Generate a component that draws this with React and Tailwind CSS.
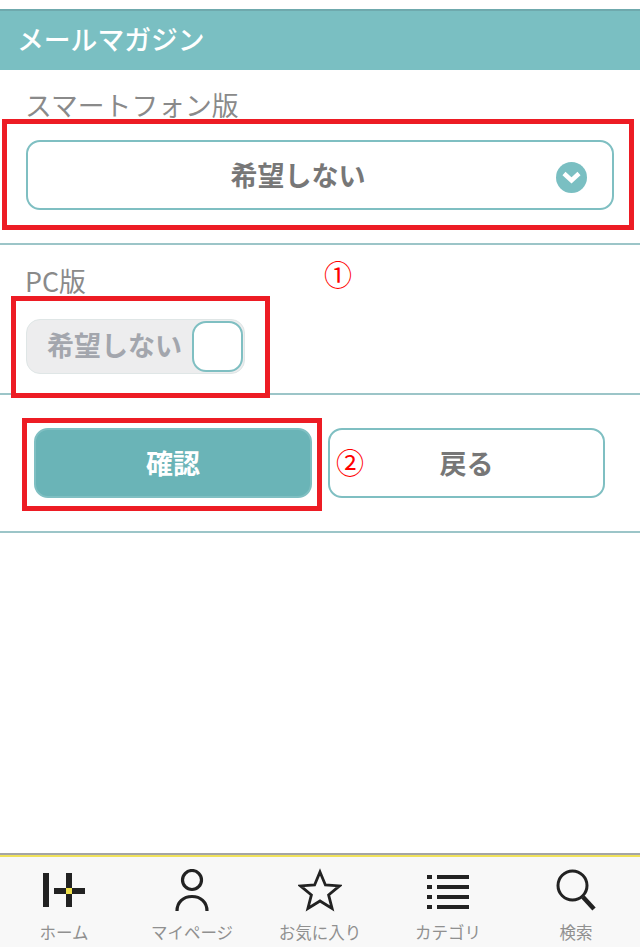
import { useState } from 'react';

const font = { cjk: 'font-["Noto_Sans_CJK_JP","Noto_Sans",sans-serif]' };

function HomeIcon() {
  return (
    <svg width="42" height="34" viewBox="0 0 42 34" className="block">
      <rect x="0" y="0" width="6" height="34" fill="#222" />
      <rect x="11" y="15" width="31" height="6" fill="#222" />
      <rect x="23" y="0" width="6" height="34" fill="#222" />
      <rect x="23" y="15" width="6" height="6" fill="#efe04a" />
    </svg>
  );
}

function PersonIcon() {
  return (
    <svg width="34" height="42" viewBox="0 0 34 42" fill="none" stroke="#222" strokeWidth="3.200" className="block">
      <circle cx="17" cy="11" r="9.500" />
      <path d="M2 42c0-9 6.500-14.500 15-14.500s15 5.500 15 14.500" />
    </svg>
  );
}

function StarIcon() {
  return (
    <svg width="44" height="44" viewBox="0 0 44 44" fill="none" stroke="#222" strokeWidth="2.800" strokeLinejoin="miter" className="block">
      <path d="M22 4l5.400 13 14.100.9-10.900 9 3.500 13.600L22 33l-12.100 7.500 3.500-13.600-10.900-9 14.100-.9z" />
    </svg>
  );
}

function ListIcon() {
  return (
    <svg width="42" height="34" viewBox="0 0 42 34" fill="#222" className="mt-[3px] block">
      <rect x="0" y="0" width="5" height="4" />
      <rect x="10" y="0" width="32" height="4" />
      <rect x="0" y="10" width="5" height="4" />
      <rect x="10" y="10" width="32" height="4" />
      <rect x="0" y="20" width="5" height="4" />
      <rect x="10" y="20" width="32" height="4" />
      <rect x="0" y="30" width="5" height="4" />
      <rect x="10" y="30" width="32" height="4" />
    </svg>
  );
}

function SearchIcon() {
  return (
    <svg width="40" height="42" viewBox="0 0 40 42" fill="none" stroke="#222" className="block">
      <circle cx="16.500" cy="16.500" r="14.500" strokeWidth="3" />
      <path d="M27 28l11 12" strokeWidth="4.500" />
    </svg>
  );
}

const navItems = [
  { label: 'ホーム', icon: <HomeIcon /> },
  { label: 'マイページ', icon: <PersonIcon /> },
  { label: 'お気に入り', icon: <StarIcon /> },
  { label: 'カテゴリ', icon: <ListIcon /> },
  { label: '検索', icon: <SearchIcon /> },
];

function App() {
  const [pc, setPc] = useState(false);

  return (
    <div className={`relative flex h-[947px] w-[640px] flex-col overflow-hidden bg-white ${font.cjk}`}>
      <div className="mt-[9px] flex h-[61px] items-center border-t-2 border-[#6fa9ad] bg-[#7abfc2] pb-[2px] pl-[17px]">
        <h1 className="text-[26.800px] font-medium leading-none text-white">メールマガジン</h1>
      </div>

      <section className="h-[175px] border-b-2 border-[#9cc5c8] px-[26px] pt-[18px]">
        <p className="-ml-px h-[34px] text-[26.800px] leading-[34px] text-[#8a8a8a]">スマートフォン版</p>
        <button
          type="button"
          className="relative mt-[18px] flex h-[70px] w-[588px] items-center justify-center rounded-[14px] border-2 border-[#7fbfc2] bg-white pb-px pr-[44px]"
        >
          <span className="text-[27px] font-bold leading-none text-[#777777]">希望しない</span>
          <span className="absolute right-[25px] top-[20px] flex h-[31px] w-[31px] items-center justify-center rounded-full bg-[#7abfc2]">
            <svg width="19" height="13" viewBox="0 0 19 13" fill="none" stroke="#fff" strokeWidth="4.500">
              <path d="M2 2.500l7.500 7 7.500-7" />
            </svg>
          </span>
        </button>
      </section>

      <section className="h-[150px] border-b-2 border-[#9cc5c8] px-[26px] pt-[19px]">
        <p className="-ml-px h-[34px] text-[26.800px] leading-[34px] text-[#8a8a8a]">PC版</p>
        <button
          type="button"
          onClick={() => setPc(!pc)}
          className="relative mt-[21px] flex h-[55px] w-[219px] items-center rounded-[14px] border border-[#dfe6e6] bg-[#ededee] pb-[5px] pl-[20px]"
        >
          <span className="text-[27px] font-bold leading-none text-[#a3a6ad]">希望しない</span>
          <span className="absolute right-px top-px h-[51px] w-[51px] rounded-[14px] border-2 border-[#7fbfc2] bg-white" />
        </button>
      </section>

      <section className="flex h-[138px] gap-[16px] border-b-2 border-[#9cc5c8] pl-[34px] pt-[33px]">
        <button
          type="button"
          className="h-[70px] w-[278px] rounded-[14px] border-2 border-[#7fbfc2] bg-[#6ab4b7] text-[27px] font-bold text-white"
        >
          確認
        </button>
        <button
          type="button"
          className="h-[70px] w-[277px] rounded-[14px] border-2 border-[#7fbfc2] bg-white text-[27px] font-bold text-[#777777]"
        >
          戻る
        </button>
      </section>

      <nav className="mt-auto grid h-[94px] grid-cols-5 border-t-2 border-[#a5a5a5] bg-[#f8f8f8] shadow-[inset_0_2px_0_#f0e25a]">
        {navItems.map((item) => (
          <div key={item.label} className="flex flex-col items-center pt-[10px]">
            <div className="flex h-[50px] items-center">{item.icon}</div>
            <span className="mt-[5px] text-[16.500px] leading-[24px] text-[#909090]">{item.label}</span>
          </div>
        ))}
      </nav>

      {/* annotations drawn over the screen */}
      <div className="absolute left-[2px] top-[119px] h-[111px] w-[632px] border-[5px] border-[#ed1c24]" />
      <div className="absolute left-[11px] top-[296px] h-[102px] w-[259px] border-[5px] border-[#ed1c24]" />
      <div className="absolute left-[22px] top-[418px] h-[93px] w-[300px] border-[5px] border-[#ed1c24]" />
      <span className="absolute left-[324px] top-[257px] text-[28px] leading-[34px] text-[#ff0000]">①</span>
      <span className="absolute left-[336px] top-[445px] text-[28px] leading-[34px] text-[#ff0000]">②</span>
    </div>
  );
}

export default App;
